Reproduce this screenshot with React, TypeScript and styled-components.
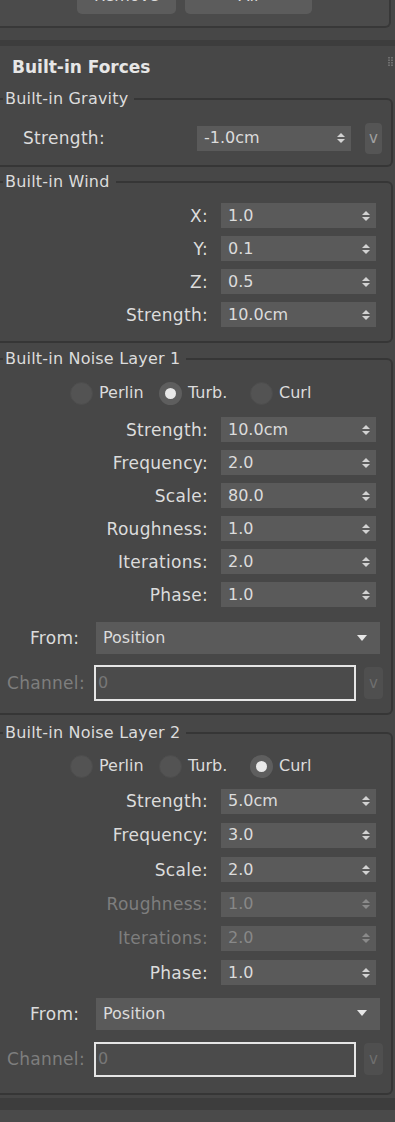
import React from 'react'
import styled, { createGlobalStyle } from 'styled-components'

const GlobalStyle = createGlobalStyle`
  html, body {
    margin: 0;
    padding: 0;
    background: #474747;
  }
  body {
    font-family: "DejaVu Sans", Verdana, sans-serif;
    font-size: 16px;
    color: #dcdcdc;
    overflow: hidden;
  }
`

type Row = { label: string; value: string; off?: boolean }

type Spacing = {
  rowH: number
  radioTop: number
  rowsTop: number
  fromTop: number
  chanTop: number
  chanH: number
  bottom: number
  top: number
}

const layer1: Row[] = [
  { label: 'Strength:', value: '10.0cm' },
  { label: 'Frequency:', value: '2.0' },
  { label: 'Scale:', value: '80.0' },
  { label: 'Roughness:', value: '1.0' },
  { label: 'Iterations:', value: '2.0' },
  { label: 'Phase:', value: '1.0' },
]

const layer2: Row[] = [
  { label: 'Strength:', value: '5.0cm' },
  { label: 'Frequency:', value: '3.0' },
  { label: 'Scale:', value: '2.0' },
  { label: 'Roughness:', value: '1.0', off: true },
  { label: 'Iterations:', value: '2.0', off: true },
  { label: 'Phase:', value: '1.0' },
]

const wind: Row[] = [
  { label: 'X:', value: '1.0' },
  { label: 'Y:', value: '0.1' },
  { label: 'Z:', value: '0.5' },
  { label: 'Strength:', value: '10.0cm' },
]

const spacing1: Spacing = { top: 7, rowH: 33, radioTop: 13, rowsTop: 8, fromTop: 11, chanTop: 11, chanH: 36, bottom: 12 }
const spacing2: Spacing = { top: 9, rowH: 34.3, radioTop: 12, rowsTop: 6, fromTop: 8, chanTop: 12, chanH: 35, bottom: 16 }

function App() {
  return (
    <Page>
      <GlobalStyle />
      <TopPanel>
        <TopButton $w={99}>Remove</TopButton>
        <TopButton $w={127}>All</TopButton>
      </TopPanel>
      <Strip />
      <Separator />
      <Rollout>
        <Title>Built-in Forces</Title>
        <Grip width="6" height="10" viewBox="0 0 6 10">
          {[0, 1, 2, 3].map(r => [0, 1].map(c => (
            <rect key={r + '-' + c} x={c * 3} y={r * 2.5} width="2" height="1.5" fill="#6e6e6e" />
          )))}
        </Grip>

        <Group $top={13}>
          <Legend>Built-in Gravity</Legend>
          <GravityRow>
            <Label $align="left">Strength:</Label>
            <Spinner $w={154}>
              <span>-1.0cm</span>
              <SpinArrows />
            </Spinner>
            <VButton $h={31} $bright>v</VButton>
          </GravityRow>
        </Group>

        <Group $top={6}>
          <Legend>Built-in Wind</Legend>
          <Rows $pt={8} $pb={10}>
            {wind.map(r => (
              <FieldRow key={r.label} $h={33}>
                <Label>{r.label}</Label>
                <Spinner>
                  <span>{r.value}</span>
                  <SpinArrows />
                </Spinner>
              </FieldRow>
            ))}
          </Rows>
        </Group>

        <NoiseLayer title="Built-in Noise Layer 1" mode="turb" rows={layer1} sp={spacing1} />
        <NoiseLayer title="Built-in Noise Layer 2" mode="curl" rows={layer2} sp={spacing2} />
      </Rollout>
      <Separator $h={12} />
      <NextPanel />
    </Page>
  )
}

function NoiseLayer(props: { title: string; mode: string; rows: Row[]; sp: Spacing }) {
  const { sp } = props
  const modes = [
    { id: 'perlin', label: 'Perlin' },
    { id: 'turb', label: 'Turb.' },
    { id: 'curl', label: 'Curl' },
  ]
  return (
    <Group $top={sp.top}>
      <Legend>{props.title}</Legend>
      <Rows $pt={sp.radioTop} $pb={sp.bottom}>
        <RadioRow>
          {modes.map(m => (
            <RadioItem key={m.id}>
              <RadioDot $on={props.mode === m.id} />
              <span>{m.label}</span>
            </RadioItem>
          ))}
        </RadioRow>
        <Spacer $h={sp.rowsTop} />
        {props.rows.map(r => (
          <FieldRow key={r.label} $h={sp.rowH}>
            <Label $off={r.off}>{r.label}</Label>
            <Spinner $off={r.off}>
              <span>{r.value}</span>
              <SpinArrows off={r.off} />
            </Spinner>
          </FieldRow>
        ))}
        <FromRow $top={sp.fromTop}>
          <Label $align="left">From:</Label>
          <Dropdown>
            <span>Position</span>
            <svg width="10" height="7" viewBox="0 0 10 7">
              <polygon points="0,0 10,0 5,6" fill="#e6e6e6" />
            </svg>
          </Dropdown>
        </FromRow>
        <ChannelRow $top={sp.chanTop} $h={sp.chanH}>
          <Label $align="left" $off>Channel:</Label>
          <ChannelField>0</ChannelField>
          <VButton $h={32}>v</VButton>
        </ChannelRow>
      </Rows>
    </Group>
  )
}

function SpinArrows(props: { off?: boolean }) {
  const c = props.off ? '#8a8a8a' : '#d2d2d2'
  return (
    <svg width="8" height="12" viewBox="0 0 8 12">
      <polygon points="0,5 4,1 8,5" fill={c} />
      <polygon points="0,7 8,7 4,11" fill={c} />
    </svg>
  )
}

const Page = styled.div`
  width: 395px;
  height: 1122px;
  overflow: hidden;
  background: #474747;
`

const TopPanel = styled.div`
  margin-top: -22px;
  width: 391px;
  height: 50px;
  box-sizing: border-box;
  display: flex;
  align-items: flex-end;
  gap: 9px;
  padding: 0 0 12px 77px;
  background: #4b4b4b;
  border-right: 2px solid #383838;
  border-bottom: 2px solid #383838;
  border-bottom-right-radius: 6px;
`

const TopButton = styled.div<{ $w: number }>`
  width: ${p => p.$w}px;
  height: 34px;
  box-sizing: border-box;
  padding-bottom: 3px;
  border-radius: 5px;
  background: #5c5c5c;
  display: flex;
  align-items: center;
  justify-content: center;
  line-height: 18px;
`

const Strip = styled.div`
  height: 12px;
  background: #474747;
`

const Separator = styled.div<{ $h?: number }>`
  height: ${p => p.$h ?? 6}px;
  background: #3d3d3d;
`

const NextPanel = styled.div`
  height: 30px;
  background: #4a4a4a;
`

const Rollout = styled.div`
  position: relative;
  background: #474747;
  padding: 11px 0 3px;
`

const Title = styled.div`
  margin-left: 12px;
  font-weight: bold;
  font-size: 17px;
  line-height: 20px;
  color: #e6e6e6;
`

const Grip = styled.svg`
  position: absolute;
  top: 11px;
  right: 1px;
`

const Group = styled.fieldset<{ $top: number }>`
  margin: ${p => p.$top}px 2px 0 0;
  padding: 0;
  min-width: 0;
  border: 2px solid #363636;
  border-left: none;
  border-radius: 0 6px 6px 0;
`

const Legend = styled.legend`
  margin-left: 3px;
  padding: 0 6px 0 2px;
  font-size: 16px;
  line-height: 18px;
  letter-spacing: 0.2px;
  color: #dcdcdc;
`

const Rows = styled.div<{ $pt: number; $pb: number }>`
  display: flex;
  flex-direction: column;
  padding: ${p => p.$pt}px 0 ${p => p.$pb}px;
`

const Spacer = styled.div<{ $h: number }>`
  height: ${p => p.$h}px;
`

const FieldRow = styled.div<{ $h: number }>`
  display: grid;
  grid-template-columns: 208px 155px;
  column-gap: 13px;
  align-items: center;
  height: ${p => p.$h}px;
`

const Label = styled.div<{ $off?: boolean; $align?: string }>`
  text-align: ${p => p.$align ?? 'right'};
  white-space: nowrap;
  font-size: 17px;
  letter-spacing: 0.3px;
  line-height: 18px;
  color: ${p => (p.$off ? '#7e7e7e' : '#dcdcdc')};
`

const Spinner = styled.div<{ $w?: number; $off?: boolean }>`
  width: ${p => p.$w ?? 155}px;
  height: 25px;
  box-sizing: border-box;
  display: flex;
  align-items: center;
  justify-content: space-between;
  padding: 0 6px 0 7px;
  background: #5a5a5a;
  line-height: 18px;
  color: ${p => (p.$off ? '#888888' : '#dcdcdc')};
`

const GravityRow = styled.div`
  display: grid;
  grid-template-columns: 160px 154px 17px;
  column-gap: 14px;
  align-items: center;
  height: 32px;
  padding: 14px 0 11px 23px;
`

const VButton = styled.div<{ $h: number; $bright?: boolean }>`
  height: ${p => p.$h}px;
  border-radius: 4px;
  background: ${p => (p.$bright ? '#555555' : '#4f4f4f')};
  color: ${p => (p.$bright ? '#a0a0a0' : '#6e6e6e')};
  display: flex;
  align-items: center;
  justify-content: center;
  font-size: 15px;
`

const RadioRow = styled.div`
  display: grid;
  grid-template-columns: 89px 91px auto;
  padding-left: 70px;
  height: 24px;
  align-items: center;
`

const RadioItem = styled.div`
  display: flex;
  align-items: center;
  gap: 6px;
  line-height: 18px;
`

const RadioDot = styled.div<{ $on: boolean }>`
  width: 23px;
  height: 23px;
  border-radius: 50%;
  box-sizing: border-box;
  background: ${p => (p.$on ? '#e8e8e8' : '#535353')};
  border: ${p => (p.$on ? '6px solid #5e5e5e' : '1px solid #4d4d4d')};
`

const FromRow = styled.div<{ $top: number }>`
  display: grid;
  grid-template-columns: 66px 284px;
  align-items: center;
  padding-left: 30px;
  margin-top: ${p => p.$top}px;
  height: 32px;
`

const Dropdown = styled.div`
  height: 32px;
  box-sizing: border-box;
  background: #5a5a5a;
  display: flex;
  align-items: center;
  justify-content: space-between;
  padding: 0 13px 0 7px;
  line-height: 18px;
`

const ChannelRow = styled.div<{ $top: number; $h: number }>`
  display: grid;
  grid-template-columns: 79px 262px 19px;
  column-gap: 8px;
  align-items: center;
  padding-left: 7px;
  margin-top: ${p => p.$top}px;
  height: ${p => p.$h}px;
`

const ChannelField = styled.div`
  height: 100%;
  box-sizing: border-box;
  border: 2px solid #e6e6e6;
  background: #4b4b4b;
  color: #777777;
  display: flex;
  align-items: center;
  padding-left: 2px;
  line-height: 18px;
`

export default App
